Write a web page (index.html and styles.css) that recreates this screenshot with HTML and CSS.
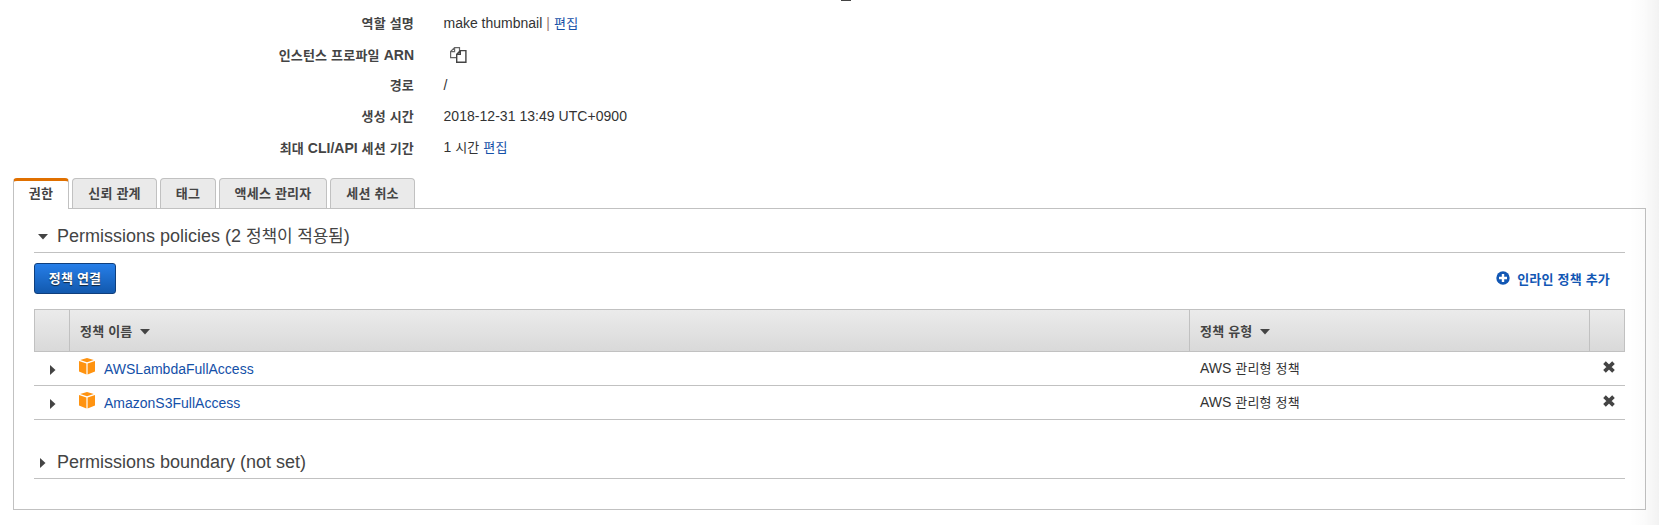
FILE: index.html
```html
<!DOCTYPE html>
<html lang="ko">
<head>
<meta charset="utf-8">
<title>IAM Role</title>
<link rel="stylesheet" href="styles.css">
</head>
<body>
<svg class="defs" width="0" height="0">
  <symbol id="cube" viewBox="0 0 16 17"><path fill="#ff9310" d="M8 0l6.800 1.900L8 4.200 1.200 1.900zM0 3l7.400 2.400v11L0 13.600zM16 3L8.600 5.400v11l7.400-2.800z"/></symbol>
  <symbol id="cross" viewBox="0 0 12 12"><path stroke="#444" stroke-width="3.700" d="M1.500 1.600l9 8.800M10.500 1.600l-9 8.800"/></symbol>
</svg>
<div class="top-mark"></div>
<dl class="summary">
  <dt class="ko">역할 설명</dt><dd class="description"><span>make thumbnail</span><span class="bar">|</span><a class="ko">편집</a></dd>
  <dt><span class="ko">인스턴스 프로파일</span> ARN</dt>
  <dd><svg class="copy" width="17" height="16" viewBox="0 0 17 16" fill="#fff" stroke="#444" stroke-width="1.200"><path stroke="#666" d="M4.600.600h4.900v10H.600V4.600zM4.600.600v4H.600"/><path stroke-width="1.400" d="M10.300 3.600h5.600v11.700H6.700V7.200zM10.300 3.600v3.600H6.700"/></svg></dd>
  <dt class="ko">경로</dt><dd>/</dd>
  <dt class="ko">생성 시간</dt><dd><span class="date">2018-12-31 13:49 UTC+0900</span></dd>
  <dt><span class="ko">최대</span> CLI/API <span class="ko">세션 기간</span></dt><dd class="duration">1 <span class="ko">시간 <a>편집</a></span></dd>
</dl>
<nav class="tabs">
  <a class="tab tab-active">권한</a><a class="tab">신뢰 관계</a><a class="tab">태그</a><a class="tab tab-wide">액세스 관리자</a><a class="tab">세션 취소</a>
</nav>
<main class="panel">
  <h2 class="section"><svg class="arrow arrow-open" width="10" height="6"><path d="M0 0h10L5 5.500z"/></svg><span class="title">Permissions policies (2 <span class="ko-title">정책이 적용됨</span>)</span></h2>
  <div class="actions">
    <button class="attach ko">정책 연결</button>
    <a class="inline-add ko"><svg width="14" height="14" viewBox="0 0 14 14"><circle cx="7" cy="7" r="6.700" fill="#1257b4"/><path d="M7 3v8M3 7h8" stroke="#fff" stroke-width="2.400"/></svg>인라인 정책 추가</a>
  </div>
  <div class="grid head ko">
    <div></div>
    <div>정책 이름<svg class="sort" width="10" height="6"><path d="M0 0h10L5 5.500z"/></svg></div>
    <div>정책 유형<svg class="sort" width="10" height="6"><path d="M0 0h10L5 5.500z"/></svg></div>
    <div></div>
  </div>
  <div class="grid row">
    <div><svg class="expand" width="6" height="10"><path d="M0 0v10l5.500-5z"/></svg></div>
    <div><svg class="cube" width="16" height="17"><use href="#cube"/></svg><a class="policy">AWSLambdaFullAccess</a></div>
    <div class="type">AWS&nbsp;<span class="ko">관리형 정책</span></div>
    <div><svg class="cross" width="12" height="12"><use href="#cross"/></svg></div>
  </div>
  <div class="grid row">
    <div><svg class="expand" width="6" height="10"><path d="M0 0v10l5.500-5z"/></svg></div>
    <div><svg class="cube" width="16" height="17"><use href="#cube"/></svg><a class="policy">AmazonS3FullAccess</a></div>
    <div class="type">AWS&nbsp;<span class="ko">관리형 정책</span></div>
    <div><svg class="cross" width="12" height="12"><use href="#cross"/></svg></div>
  </div>
  <h2 class="section boundary"><svg class="arrow" width="10" height="10"><path d="M2 0v10l5.500-5z"/></svg><span class="title">Permissions boundary (not set)</span></h2>
</main>
<div class="edge"></div>
</body>
</html>
```
FILE: styles.css
```css
* { box-sizing: border-box; }
body {
  margin: 0;
  height: 525px;
  overflow: hidden;
  padding: 0 13px;
  background: #fff;
  color: #444;
  font: 14px "Liberation Sans", "Noto Sans CJK KR", sans-serif;
}
a { color: #1450a8; }
.defs { position: absolute; }
.ko { font-family: "Noto Sans CJK KR", sans-serif; font-size: 13px; letter-spacing: .2px; }
.top-mark { width: 10px; height: 1px; margin-left: 828px; background: #444; }
.summary {
  display: grid;
  grid-template-columns: 401px 1fr;
  grid-auto-rows: 31px;
  column-gap: 29.5px;
  margin: 0;
  padding-top: 7px;
  line-height: 31px;
}
.summary dt { text-align: right; font-weight: bold; white-space: nowrap; }
.summary dt.ko { line-height: 29px; }
.summary dd { margin: 0; white-space: nowrap; color: #333; }
.summary .description, .summary .duration { line-height: 29px; }
.date { letter-spacing: .04px; }
.bar { margin: 0 4px; color: #997b70; }
.copy { display: block; margin: 8px 0 0 6px; }
.tabs { display: flex; gap: 3px; height: 30px; margin-top: 15px; }
.tab {
  width: 85px;
  height: 30px;
  border: 1px solid #c1c1c1;
  border-bottom: 0;
  border-radius: 4px 4px 0 0;
  background: #eaeaea;
  color: #444;
  font: bold 13px/27px "Noto Sans CJK KR", sans-serif;
  letter-spacing: .2px;
  text-align: center;
}
.tab:first-child, .tab:nth-child(3) { width: 56px; }
.tab-wide { width: 108px; }
.tab-active {
  height: 31px;
  border-top: 3px solid #e07000;
  background: #fff;
  line-height: 23px;
  position: relative;
}
.panel { height: 302px; border: 1px solid #c1c1c1; padding: 0 20px; }
.section {
  display: flex;
  align-items: center;
  height: 44px;
  margin: 0;
  padding: 10px 0 0 4px;
  border-bottom: 1px solid #c1c1c1;
  font-size: 18px;
  font-weight: normal;
  line-height: 28px;
}
.arrow { margin: 2px 9px 0 0; fill: #444; }
.arrow-open { margin-top: 3px; }
.section .title { white-space: nowrap; }
.ko-title { font-family: "Noto Sans CJK KR", sans-serif; font-size: 17px; line-height: 20px; letter-spacing: -.15px; }
.actions { display: flex; justify-content: space-between; align-items: center; height: 56px; padding-bottom: 6px; }
.attach {
  width: 82px;
  height: 31px;
  padding: 0 0 1px;
  border: 1px solid #0f3f7d;
  border-radius: 3px;
  background: linear-gradient(#267ee8, #1259ae);
  color: #fff;
  font-weight: bold;
  text-shadow: 0 1px 1px #123;
}
.inline-add { display: flex; align-items: center; gap: 7px; margin-right: 15px; font-weight: bold; color: #1257b4; }
.grid { display: grid; grid-template-columns: 35px 1120px 400px 1fr; }
.grid > div { display: flex; align-items: center; }
.head { height: 43px; border: 1px solid #c1c1c1; background: linear-gradient(#ebebeb, #d9d9d9); font-weight: bold; }
.head > div { border-left: 1px solid #c1c1c1; padding: 0 0 1px 10px; }
.head > div:first-child { border-left: 0; }
.head { grid-template-columns: 34px 1120px 400px 1fr; }
.sort { margin: 4px 0 0 8px; fill: #444; }
.row { height: 34px; border-bottom: 1px solid #c1c1c1; }
.expand { margin: 3px 0 0 16px; fill: #444; }
.cube { margin: -4px 9px 0 10px; }
.policy { margin-top: 1px; }
.row .type { padding: 0 0 2px 11px; color: #333; }
.cross { margin-left: 14px; margin-top: -3px; }
.boundary { height: 59px; padding-top: 26px; }
.edge {
  position: absolute;
  top: 0;
  right: 0;
  width: 30px;
  height: 525px;
  background: linear-gradient(to right, rgba(0,0,0,0), rgba(0,0,0,.015) 50%, rgba(0,0,0,.05));
}
```
